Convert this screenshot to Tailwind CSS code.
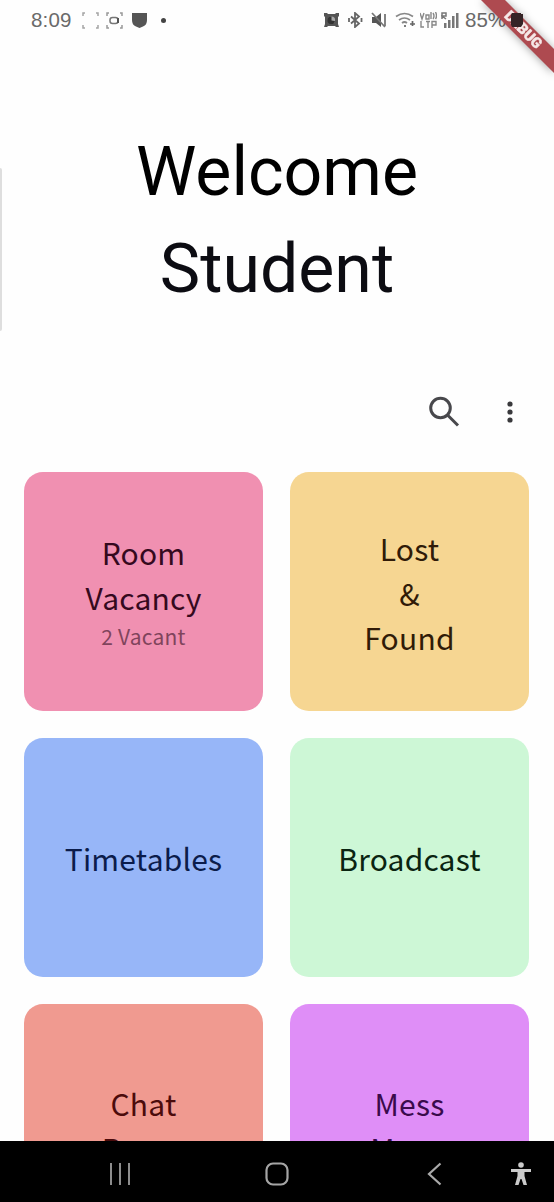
<!DOCTYPE html>
<html lang="en">
<head>
<meta charset="utf-8">
<title>Welcome Student</title>
<script src="https://cdn.jsdelivr.net/npm/@tailwindcss/browser@4"></script>
</head>
<body class="bg-[#fefefe]">
<div class="relative flex h-[1202px] w-[554px] flex-col overflow-hidden font-['Roboto',sans-serif]">
  <!-- status bar -->
  <header class="flex h-[40px] shrink-0 items-center justify-between pr-[31px] pl-[31px] text-[#6a6a6a]">
    <div class="flex items-center">
      <span class="w-[43px] font-['Liberation_Sans',sans-serif] text-[20.5px] tracking-[0.2px] whitespace-nowrap">8:09</span>
      <svg class="ml-[8px]" width="17" height="17" viewBox="0 0 17 17" fill="none" stroke="#a5a5a5" stroke-width="1.5"><path d="M1 4V1h2M14 1h2v3M16 13v3h-2M3 16H1v-3"/></svg>
      <svg class="ml-[7px]" width="17" height="17" viewBox="0 0 17 17" fill="none" stroke="#999" stroke-width="1.5"><path d="M1 4V1h2M14 1h2v3M16 13v3h-2M3 16H1v-3"/><rect x="4" y="5.500" width="8" height="6" rx="2.500" stroke="#777"/><path d="M12 6v5" stroke="#555" stroke-width="2"/></svg>
      <svg class="ml-[9px]" width="15" height="16" viewBox="0 0 15 16"><path d="M0 1h15v7q0 5-4 6.500L7.500 16 4 14.500Q0 13 0 8z" fill="#555"/></svg>
      <span class="ml-[14px] h-[5px] w-[5px] rounded-full bg-[#444]"></span>
    </div>
    <div class="flex items-center">
      <svg width="15" height="16" viewBox="0 0 15 16"><path d="M0 1h3l1 1h7l1-1h3v3l-1 1v7l1 3h-3l-1-1H4l-1 1H0l1-3V5L0 4z" fill="#555"/><circle cx="7.500" cy="8" r="3.600" fill="#aaa"/><path d="M7.500 8.500V4.500A3.800 3.800 0 1 0 11 9z" fill="#333"/></svg>
      <svg class="ml-[8px]" width="16" height="16" viewBox="0 0 16 16" fill="none" stroke="#666" stroke-width="1.800"><path d="M4 4.500l8 7L8 15V1l4 3.500-8 7M2 6v4M14.500 6v4"/></svg>
      <svg class="ml-[8px]" width="16" height="16" viewBox="0 0 16 16"><path d="M1 5h4l5-4v14l-5-4H1z" fill="#555"/><path d="M1 1l13 14M14 2v12" stroke="#777" stroke-width="1.800"/></svg>
      <svg class="ml-[8px]" width="21" height="16" viewBox="0 0 21 16" fill="none" stroke="#888" stroke-width="1.700"><path d="M1 4.500q8.500-6 17 0M4 8q5.500-4 11 0M7 11q2.500-2 5 0"/><path d="M10 15v-2M15 12h5M17.500 9v5" stroke="#666"/></svg>
      <svg class="ml-[4px]" width="17" height="17" viewBox="0 0 17 17" fill="none" stroke="#888" stroke-width="1.400"><path d="M0 1l2 6 2-6M6 3h3v4H6zM11 0v7M13 1q2 3 0 6M15.500 0q2 4 0 7M1 9v6h3M6 9.500h4M8 10v6M12 16V9.500h4V13h-4"/></svg>
      <svg class="ml-[4px]" width="18" height="17" viewBox="0 0 18 17"><path d="M1 7V1h4v3H1l4 3" fill="none" stroke="#777" stroke-width="1.500"/><path d="M3 11h2.500v5H3zM7 8h2.500v8H7zM11 4h2.500v12H11zM15 1h2.500v15H15z" fill="#777"/></svg>
      <span class="ml-[6px] w-[45px] font-['Liberation_Sans',sans-serif] text-[20.5px] whitespace-nowrap">85%</span>
      <span class="w-[13px]"></span>
    </div>
  </header>

  <main class="flex min-h-0 flex-1 flex-col overflow-hidden">
    <h1 class="pt-[84px] text-center text-[68px] leading-[97px] font-normal text-[#0c0c12]"><span class="text-black">Welcome</span><br>Student</h1>

    <div class="mt-[74px] flex h-[40px] shrink-0 items-center justify-end pr-[38px]">
      <svg width="32" height="32" viewBox="0 0 32 32" fill="none" stroke="#48484c" stroke-width="3"><circle cx="11.500" cy="12" r="9.800"/><path d="M18.500 19l10.500 10.500"/></svg>
      <svg class="ml-[43px]" width="12" height="24" viewBox="0 0 12 24" fill="#39393c"><circle cx="6" cy="4" r="2.600"/><circle cx="6" cy="12" r="2.600"/><circle cx="6" cy="20" r="2.600"/></svg>
    </div>

    <section class="mt-[40px] grid shrink-0 auto-rows-[239px] grid-cols-2 gap-[27px] pr-[25px] pl-[24px] text-center font-['Noto_Sans_CJK_SC',sans-serif] text-[30px] leading-[44.5px] tracking-[0.2px]">
      <div class="flex flex-col items-center justify-center rounded-[19px] bg-[#f090b1] text-[#35091e]"><div>Room<br>Vacancy</div><div class="pt-px text-[21px] leading-[33px] text-[#80445c]">2 Vacant</div></div>
      <div class="flex items-center justify-center rounded-[19px] bg-[#f6d692] pt-[3px] text-[#301b08]"><div>Lost<br>&amp;<br>Found</div></div>
      <div class="flex items-center justify-center rounded-[19px] bg-[#97b6f8] pt-[2px] text-[#0b1c4b]">Timetables</div>
      <div class="flex items-center justify-center rounded-[19px] bg-[#cdf7d6] pt-[2px] text-[#0a2411]">Broadcast</div>
      <div class="flex items-center justify-center rounded-[19px] bg-[#f09a90] pt-[4px] text-[#4b0b0b]"><div>Chat<br>Room</div></div>
      <div class="flex items-center justify-center rounded-[19px] bg-[#df8ef7] pt-[4px] text-[#3a0a4c]"><div>Mess<br>Menu</div></div>
    </section>
  </main>

  <!-- system navigation -->
  <nav class="flex h-[61px] shrink-0 items-center bg-black pt-[5px] pl-[109px]">
    <svg width="22" height="22" viewBox="0 0 22 22" stroke="#8c8c8c" stroke-width="2"><path d="M2 0v22M11 0v22M20 0v22"/></svg>
    <svg class="ml-[134px]" width="24" height="24" viewBox="0 0 24 24" fill="none" stroke="#a5a5a5" stroke-width="2.200"><rect x="1.500" y="1.500" width="21" height="21" rx="6.500"/></svg>
    <svg class="ml-[138px]" width="16" height="24" viewBox="0 0 16 24" fill="none" stroke="#aaa" stroke-width="2.200"><path d="M13.500 1.500L2 12l11.500 10.500"/></svg>
    <svg class="ml-[68px]" width="20" height="24" viewBox="0 0 20 24" fill="#cacaca"><circle cx="10" cy="3" r="2.800"/><path d="M0 7h20v3h-6.500v4l2.500 9h-3.500L10.500 17h-1L7.500 23H4l2.500-9v-4H0z"/></svg>
  </nav>

  <!-- debug ribbon over the top right corner -->
  <svg class="absolute top-0 right-0 drop-shadow-[0_1px_4px_rgba(0,0,0,0.35)]" width="84" height="84" viewBox="0 0 84 84">
    <path d="M11 0h24l49 49v24z" fill="#ae4a50"/>
    <text transform="translate(53.500 29.500) rotate(45)" text-anchor="middle" y="5" font-family="Roboto, sans-serif" font-weight="900" font-size="14.500" fill="#f6e8e8" stroke="#f6e8e8" stroke-width="0.400">DEBUG</text>
    <path d="M42 13h9v1h2v10l-2 3h-9l-1-2V15z" fill="#352326"/>
  </svg>
  <!-- edge panel handle -->
  <div class="absolute top-[168px] left-0 h-[163px] w-[2px] rounded-r bg-[#dedede]"></div>
</div>
</body>
</html>
